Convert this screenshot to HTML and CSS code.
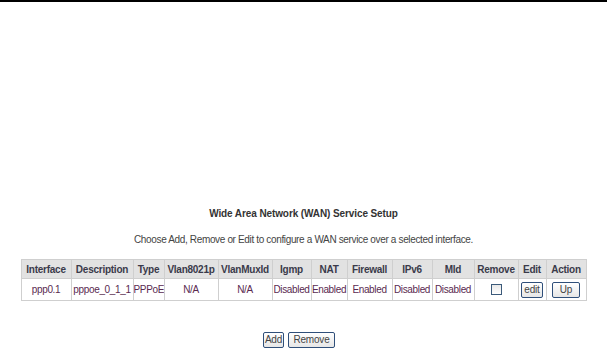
FILE: index.html
```html
<!DOCTYPE html>
<html>
<head>
<meta charset="utf-8">
<link rel="stylesheet" href="styles.css">
</head>
<body>
<div class="topbar"></div>
<div class="page">
  <div class="title">Wide Area Network (WAN) Service Setup</div>
  <div class="subtitle">Choose Add, Remove or Edit to configure a WAN service over a selected interface.</div>
  <table class="wan">
    <colgroup>
      <col style="width:50px"><col style="width:62px"><col style="width:31px"><col style="width:54px"><col style="width:54px"><col style="width:39px"><col style="width:36px"><col style="width:45px"><col style="width:40px"><col style="width:42px"><col style="width:44px"><col style="width:28px"><col style="width:40px">
    </colgroup>
    <tr class="hd">
      <td>Interface</td><td>Description</td><td>Type</td><td>Vlan8021p</td><td>VlanMuxId</td><td>Igmp</td><td>NAT</td><td>Firewall</td><td>IPv6</td><td>Mld</td><td>Remove</td><td>Edit</td><td>Action</td>
    </tr>
    <tr class="row">
      <td>ppp0.1</td><td>pppoe_0_1_1</td><td>PPPoE</td><td>N/A</td><td>N/A</td><td>Disabled</td><td>Enabled</td><td>Enabled</td><td>Disabled</td><td>Disabled</td><td><span class="chk"></span></td><td><button class="btn">edit</button></td><td><button class="btn up">Up</button></td>
    </tr>
  </table>
  <div class="actions">
    <button class="btn add">Add</button>
    <button class="btn remove">Remove</button>
  </div>
</div>
</body>
</html>
```
FILE: styles.css
```css
html, body {
  margin: 0;
  padding: 0;
  background: #fff;
}
body {
  font-family: "Liberation Sans", Arial, sans-serif;
  font-size: 10px;
  letter-spacing: -0.35px;
  color: #333;
}
.topbar {
  height: 2px;
  background: #000;
}
.page {
  padding-top: 205px;
  display: flex;
  flex-direction: column;
  align-items: center;
}
.title {
  font-weight: bold;
  letter-spacing: -0.1px;
  line-height: 14px;
  color: #333;
}
.subtitle {
  margin-top: 12px;
  line-height: 14px;
  color: #444;
}
.wan {
  margin-top: 12px;
  border-collapse: collapse;
  table-layout: fixed;
  width: 565px;
  border: 1px solid #c4c4c4;
}
.wan td {
  border: 1px solid #cfcfcf;
  text-align: center;
  padding: 0;
  white-space: nowrap;
  overflow: hidden;
}
.hd td {
  height: 18px;
  background: #e2e2e2;
  font-weight: bold;
  letter-spacing: -0.25px;
  color: #3a3a4a;
}
.row td {
  height: 21px;
  color: #5a2a50;
}
.chk {
  display: inline-block;
  width: 9px;
  height: 9px;
  border: 1px solid #3b5a7a;
  background: linear-gradient(#e8e8e8, #fff);
  vertical-align: middle;
}
.btn {
  font-family: "Liberation Sans", Arial, sans-serif;
  font-size: 10px;
  letter-spacing: -0.2px;
  color: #444;
  height: 16px;
  padding: 0 2px;
  border: 1px solid #2f4f7a;
  border-radius: 2px;
  background: linear-gradient(#ffffff, #e6e6e6);
  line-height: 14px;
  vertical-align: middle;
}
.btn.up {
  padding: 0 7px;
}
.btn.add {
  width: 21px;
  padding: 0;
}
.btn.remove {
  width: 47px;
  padding: 0;
}
.actions {
  margin-top: 31px;
  display: flex;
  gap: 4px;
  padding-right: 9px;
}
```
